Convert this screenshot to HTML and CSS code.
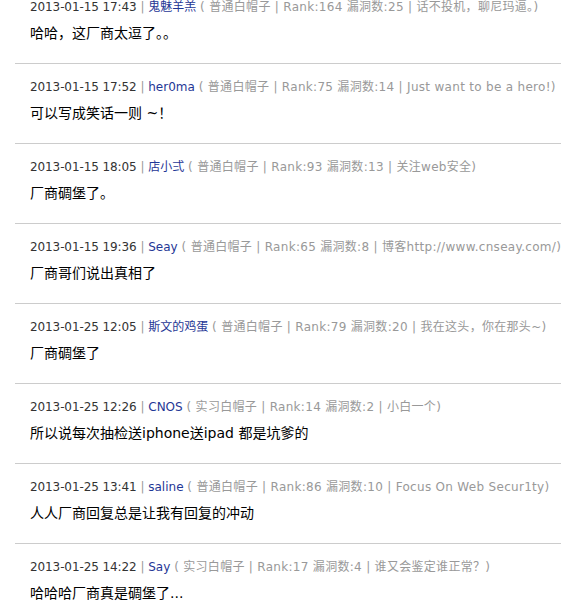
FILE: index.html
```
<!DOCTYPE html>
<html lang="zh-CN">

<head>
    <meta charset="UTF-8">
    <meta name="viewport" content="width=device-width, initial-scale=1.0">
    <title>评论</title>
    <link rel="stylesheet" href="styles.css">
</head>

<body>

    <div class="comments">
        <div class="item">
            <p class="meta"><span class="date">2013-01-15 17:43</span> <span class="sep">|</span> <a class="user">鬼魅羊羔</a> <span class="info">( 普通白帽子 | Rank:164 漏洞数:25 | 话不投机，聊尼玛逼。)</span></p>
            <p class="text">哈哈，这厂商太逗了。。</p>
        </div>
        <div class="item">
            <p class="meta"><span class="date">2013-01-15 17:52</span> <span class="sep">|</span> <a class="user">her0ma</a> <span class="info">( 普通白帽子 | Rank:75 漏洞数:14 | Just want to be a hero!)</span></p>
            <p class="text">可以写成笑话一则 ~！</p>
        </div>
        <div class="item">
            <p class="meta"><span class="date">2013-01-15 18:05</span> <span class="sep">|</span> <a class="user">店小弍</a> <span class="info">( 普通白帽子 | Rank:93 漏洞数:13 | 关注web安全)</span></p>
            <p class="text">厂商碉堡了。</p>
        </div>
        <div class="item">
            <p class="meta"><span class="date">2013-01-15 19:36</span> <span class="sep">|</span> <a class="user">Seay</a> <span class="info">( 普通白帽子 | Rank:65 漏洞数:8 | 博客http://www.cnseay.com/)</span></p>
            <p class="text">厂商哥们说出真相了</p>
        </div>
        <div class="item">
            <p class="meta"><span class="date">2013-01-25 12:05</span> <span class="sep">|</span> <a class="user">斯文的鸡蛋</a> <span class="info">( 普通白帽子 | Rank:79 漏洞数:20 | 我在这头，你在那头~)</span></p>
            <p class="text">厂商碉堡了</p>
        </div>
        <div class="item">
            <p class="meta"><span class="date">2013-01-25 12:26</span> <span class="sep">|</span> <a class="user">CNOS</a> <span class="info">( 实习白帽子 | Rank:14 漏洞数:2 | 小白一个)</span></p>
            <p class="text">所以说每次抽检送iphone送ipad 都是坑爹的</p>
        </div>
        <div class="item">
            <p class="meta"><span class="date">2013-01-25 13:41</span> <span class="sep">|</span> <a class="user">saline</a> <span class="info">( 普通白帽子 | Rank:86 漏洞数:10 | Focus On Web Secur1ty)</span></p>
            <p class="text">人人厂商回复总是让我有回复的冲动</p>
        </div>
        <div class="item">
            <p class="meta"><span class="date">2013-01-25 14:22</span> <span class="sep">|</span> <a class="user">Say</a> <span class="info">( 实习白帽子 | Rank:17 漏洞数:4 | 谁又会鉴定谁正常？)</span></p>
            <p class="text">哈哈哈厂商真是碉堡了...</p>
        </div>
    </div>

</body>

</html>
```

FILE: styles.css
```
body {
    margin: 0;
    padding: 0;
    background: #ffffff;
    font-family: "DejaVu Sans", "Noto Sans CJK SC", sans-serif;
    overflow: hidden;
}

.comments {
    margin: -16px 0 0 15px;
    width: 600px;
}

.item {
    padding: 13px 0 20px 15px;
    border-bottom: 1px solid #cccccc;
    white-space: nowrap;
}

.meta {
    margin: 0;
    font-size: 12px;
    line-height: 20px;
    color: #999999;
}

.date {
    color: #333333;
    letter-spacing: -0.1px;
}

.sep {
    color: #999999;
}

.user {
    color: #1f3796;
    text-decoration: none;
}

.info {
    letter-spacing: 0.3px;
}

.text {
    margin: 6px 0 0 0;
    font-size: 14px;
    line-height: 20px;
    color: #000000;
}
```
